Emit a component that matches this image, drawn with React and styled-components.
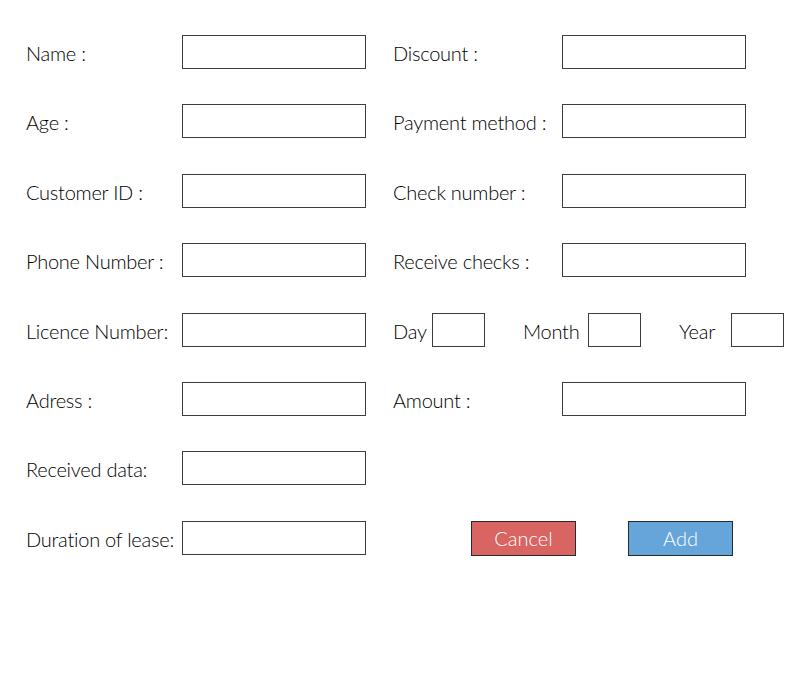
import React from "react";
import styled, { createGlobalStyle } from "styled-components";

const GlobalStyle = createGlobalStyle`
  body {
    margin: 0;
    background: #ffffff;
    font-family: "Lato", "DejaVu Sans", sans-serif;
    color: #000000;
  }
`;

const leftFields = [
  "Name :",
  "Age :",
  "Customer ID :",
  "Phone Number :",
  "Licence Number:",
  "Adress :",
  "Received data:",
  "Duration of lease:",
];

const rightFields = ["Discount :", "Payment method :", "Check number :", "Receive checks :"];

const App = () => {
  return (
    <>
      <GlobalStyle />
      <Page>
        <Column>
          {leftFields.map((label) => (
            <Row key={label}>
              <Label width="156px">{label}</Label>
              <Input width="184px" />
            </Row>
          ))}
        </Column>
        <RightColumn>
          {rightFields.map((label) => (
            <Row key={label}>
              <Label width="169px">{label}</Label>
              <Input width="184px" />
            </Row>
          ))}
          <Row>
            <Label width="39px">Day</Label>
            <Input width="53px" />
            <Label width="65px" gap="38px">Month</Label>
            <Input width="53px" />
            <Label width="52px" gap="38px">Year</Label>
            <Input width="53px" />
          </Row>
          <Row>
            <Label width="169px">Amount :</Label>
            <Input width="184px" />
          </Row>
          <Row />
          <ButtonRow>
            <Button bg="#d96563">Cancel</Button>
            <Button bg="#66a5da">Add</Button>
          </ButtonRow>
        </RightColumn>
      </Page>
    </>
  );
};

export default App;

const Page = styled.div`
  display: flex;
  padding: 35px 0 0 26px;
  width: 785px;
  height: 700px;
  box-sizing: border-box;
  overflow: hidden;
`;
const Column = styled.div`
  display: flex;
  flex-direction: column;
  gap: 35.4px;
`;
const RightColumn = styled(Column)`
  margin-left: 27px;
`;
const Row = styled.div`
  display: flex;
  align-items: center;
  height: 34px;
`;
const Label = styled.span`
  width: ${({ width }) => width};
  margin-left: ${({ gap }) => gap || "0"};
  flex-shrink: 0;
  font-size: 20px;
  font-weight: 300;
  letter-spacing: -0.25px;
  white-space: nowrap;
  padding-top: 2px;
  color: #000000;
`;
const Input = styled.div`
  width: ${({ width }) => width};
  height: 34px;
  box-sizing: border-box;
  border: 1px solid #3c3c3c;
  background: #ffffff;
  flex-shrink: 0;
`;
const ButtonRow = styled.div`
  display: flex;
  gap: 52px;
  padding-left: 78px;
  height: 35px;
`;
const Button = styled.div`
  width: 105px;
  height: 35px;
  box-sizing: border-box;
  border: 1px solid #2a2a2a;
  background: ${({ bg }) => bg};
  color: #ffffff;
  font-size: 20px;
  font-weight: 300;
  display: flex;
  align-items: center;
  justify-content: center;
`;
